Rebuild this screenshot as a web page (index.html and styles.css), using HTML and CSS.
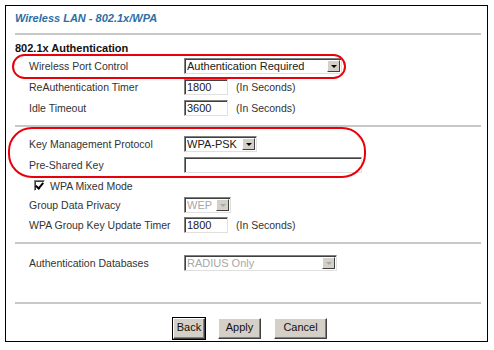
FILE: index.html
```html
<!DOCTYPE html>
<html lang="en">
<head>
    <meta charset="UTF-8">
    <title>Wireless LAN - 802.1x/WPA</title>
    <link rel="stylesheet" href="styles.css">
</head>
<body>
    <div class="frame">
        <div class="title">Wireless LAN - 802.1x/WPA</div>
        <div class="rule"></div>

        <div class="heading">802.1x Authentication</div>
        <div class="row">
            <span class="label">Wireless Port Control</span>
            <div class="select w-port"><span class="value">Authentication Required</span><span class="arrow"></span></div>
        </div>
        <div class="row">
            <span class="label">ReAuthentication Timer</span>
            <div class="input w-num">1800</div>
            <span class="unit">(In Seconds)</span>
        </div>
        <div class="row">
            <span class="label">Idle Timeout</span>
            <div class="input w-num">3600</div>
            <span class="unit">(In Seconds)</span>
        </div>

        <div class="rule rule-mid"></div>

        <div class="row row-first">
            <span class="label">Key Management Protocol</span>
            <div class="select w-kmp"><span class="value">WPA-PSK</span><span class="arrow"></span></div>
        </div>
        <div class="row">
            <span class="label">Pre-Shared Key</span>
            <div class="input w-psk"></div>
        </div>
        <div class="row row-check">
            <span class="check"></span>
            <span class="label">WPA Mixed Mode</span>
        </div>
        <div class="row row-short">
            <span class="label">Group Data Privacy</span>
            <div class="select w-wep disabled"><span class="value">WEP</span><span class="arrow"></span></div>
        </div>
        <div class="row">
            <span class="label">WPA Group Key Update Timer</span>
            <div class="input w-num">1800</div>
            <span class="unit">(In Seconds)</span>
        </div>

        <div class="rule rule-mid"></div>

        <div class="row row-db">
            <span class="label">Authentication Databases</span>
            <div class="select w-db disabled"><span class="value">RADIUS Only</span><span class="arrow"></span></div>
        </div>

        <div class="rule rule-bottom"></div>

        <div class="buttons">
            <span class="btn btn-default w-back">Back</span>
            <span class="btn w-apply">Apply</span>
            <span class="btn w-cancel">Cancel</span>
        </div>
    </div>

    <!-- red callouts drawn over the form -->
    <div class="callout callout-port"></div>
    <div class="callout callout-key"></div>
</body>
</html>
```

FILE: styles.css
```css
:root {
    --text: #333333;
    --muted: #a8a8a8;
    --face: #d4d0c8;
    --shadow: #808080;
    --dark: #404040;
    --rule: #c8c8c8;
    --callout: #e8000b;
}

body {
    margin: 0;
    background: #ffffff;
    font-family: "Liberation Sans", Arial, sans-serif;
    font-size: 11px;
    color: var(--text);
    position: relative;
    width: 494px;
    height: 350px;
    overflow: hidden;
}

.frame {
    margin: 5px 0 0 5px;
    width: 483px;
    height: 337px;
    border: 1px solid #000000;
    padding: 0 6px 0 9px;
    box-sizing: border-box;
}

.title {
    margin-top: 5px;
    line-height: 14px;
    font-weight: bold;
    font-style: italic;
    color: #2b6ea6;
}

.rule {
    height: 2px;
    background: var(--rule);
    margin-top: 8px;
}

.rule-mid {
    margin-top: 7px;
}

.rule-bottom {
    margin-top: 29px;
}

.heading {
    margin-top: 6px;
    line-height: 14px;
    font-weight: bold;
    color: #111111;
}

.row {
    display: flex;
    align-items: center;
    height: 21px;
    padding-left: 14px;
    font-size: 10.5px;
}

.row-first {
    margin-top: 6px;
}

.row-check {
    padding-left: 19px;
}

.row-short {
    height: 18px;
}

.row-db {
    margin-top: 8px;
}

.label {
    width: 155px;
    flex: none;
}

.row-check .label {
    width: auto;
}

.unit {
    margin-left: 8px;
}

/* classic sunken controls */
.input,
.select {
    box-sizing: border-box;
    height: 16px;
    border-style: solid;
    border-width: 1px;
    border-color: var(--shadow) #e0e0e0 #e0e0e0 var(--shadow);
    box-shadow: inset 1px 1px 0 var(--dark);
    background: #ffffff;
    line-height: 14px;
    padding-left: 2px;
    color: #202020;
    font-size: 11px;
}

.select {
    display: flex;
    align-items: center;
    padding-right: 1px;
}

.select .value {
    flex: 1;
    white-space: nowrap;
    overflow: hidden;
}

.arrow {
    width: 13px;
    height: 12px;
    background: var(--face);
    border-style: solid;
    border-width: 1px;
    border-color: #ffffff var(--dark) var(--dark) #ffffff;
    box-sizing: border-box;
    position: relative;
    flex: none;
}

.arrow::after {
    content: "";
    position: absolute;
    left: 3px;
    top: 4px;
    border-left: 3px solid transparent;
    border-right: 3px solid transparent;
    border-top: 3px solid #000000;
}

.disabled .value {
    color: var(--muted);
}

.disabled .arrow::after {
    border-top-color: var(--muted);
}

.w-port { width: 158px; }
.w-num { width: 44px; }
.w-kmp { width: 73px; }
.w-psk { width: 178px; }
.w-wep { width: 47px; }
.w-db { width: 153px; }

.check {
    width: 11px;
    height: 11px;
    box-sizing: border-box;
    border-style: solid;
    border-width: 1px;
    border-color: var(--shadow) #ffffff #ffffff var(--shadow);
    box-shadow: inset 1px 1px 0 var(--dark);
    background: #ffffff;
    position: relative;
    margin-right: 5px;
}

.check::after {
    content: "";
    position: absolute;
    left: 2px;
    top: 0;
    width: 3px;
    height: 6px;
    border-right: 2px solid #000000;
    border-bottom: 2px solid #000000;
    transform: rotate(40deg);
}

.buttons {
    display: flex;
    justify-content: center;
    gap: 13px;
    margin-top: 14px;
    padding-left: 4px;
}

.btn {
    box-sizing: border-box;
    height: 21px;
    line-height: 17px;
    text-align: center;
    background: var(--face);
    border-style: solid;
    border-width: 1px;
    border-color: #ffffff var(--dark) var(--dark) #ffffff;
    box-shadow: inset -1px -1px 0 var(--shadow);
    color: #111111;
}

.w-back { width: 32px; }
.w-apply { width: 43px; }
.w-cancel { width: 53px; }

.btn-default {
    outline: 1px solid #000000;
    outline-offset: 0;
}

.callout {
    position: absolute;
    border: 2.5px solid var(--callout);
    box-sizing: border-box;
}

.callout-port {
    left: 12px;
    top: 54px;
    width: 334px;
    height: 25px;
    border-radius: 13px;
}

.callout-key {
    left: 8px;
    top: 127px;
    width: 358px;
    height: 51px;
    border-radius: 24px;
}
```
